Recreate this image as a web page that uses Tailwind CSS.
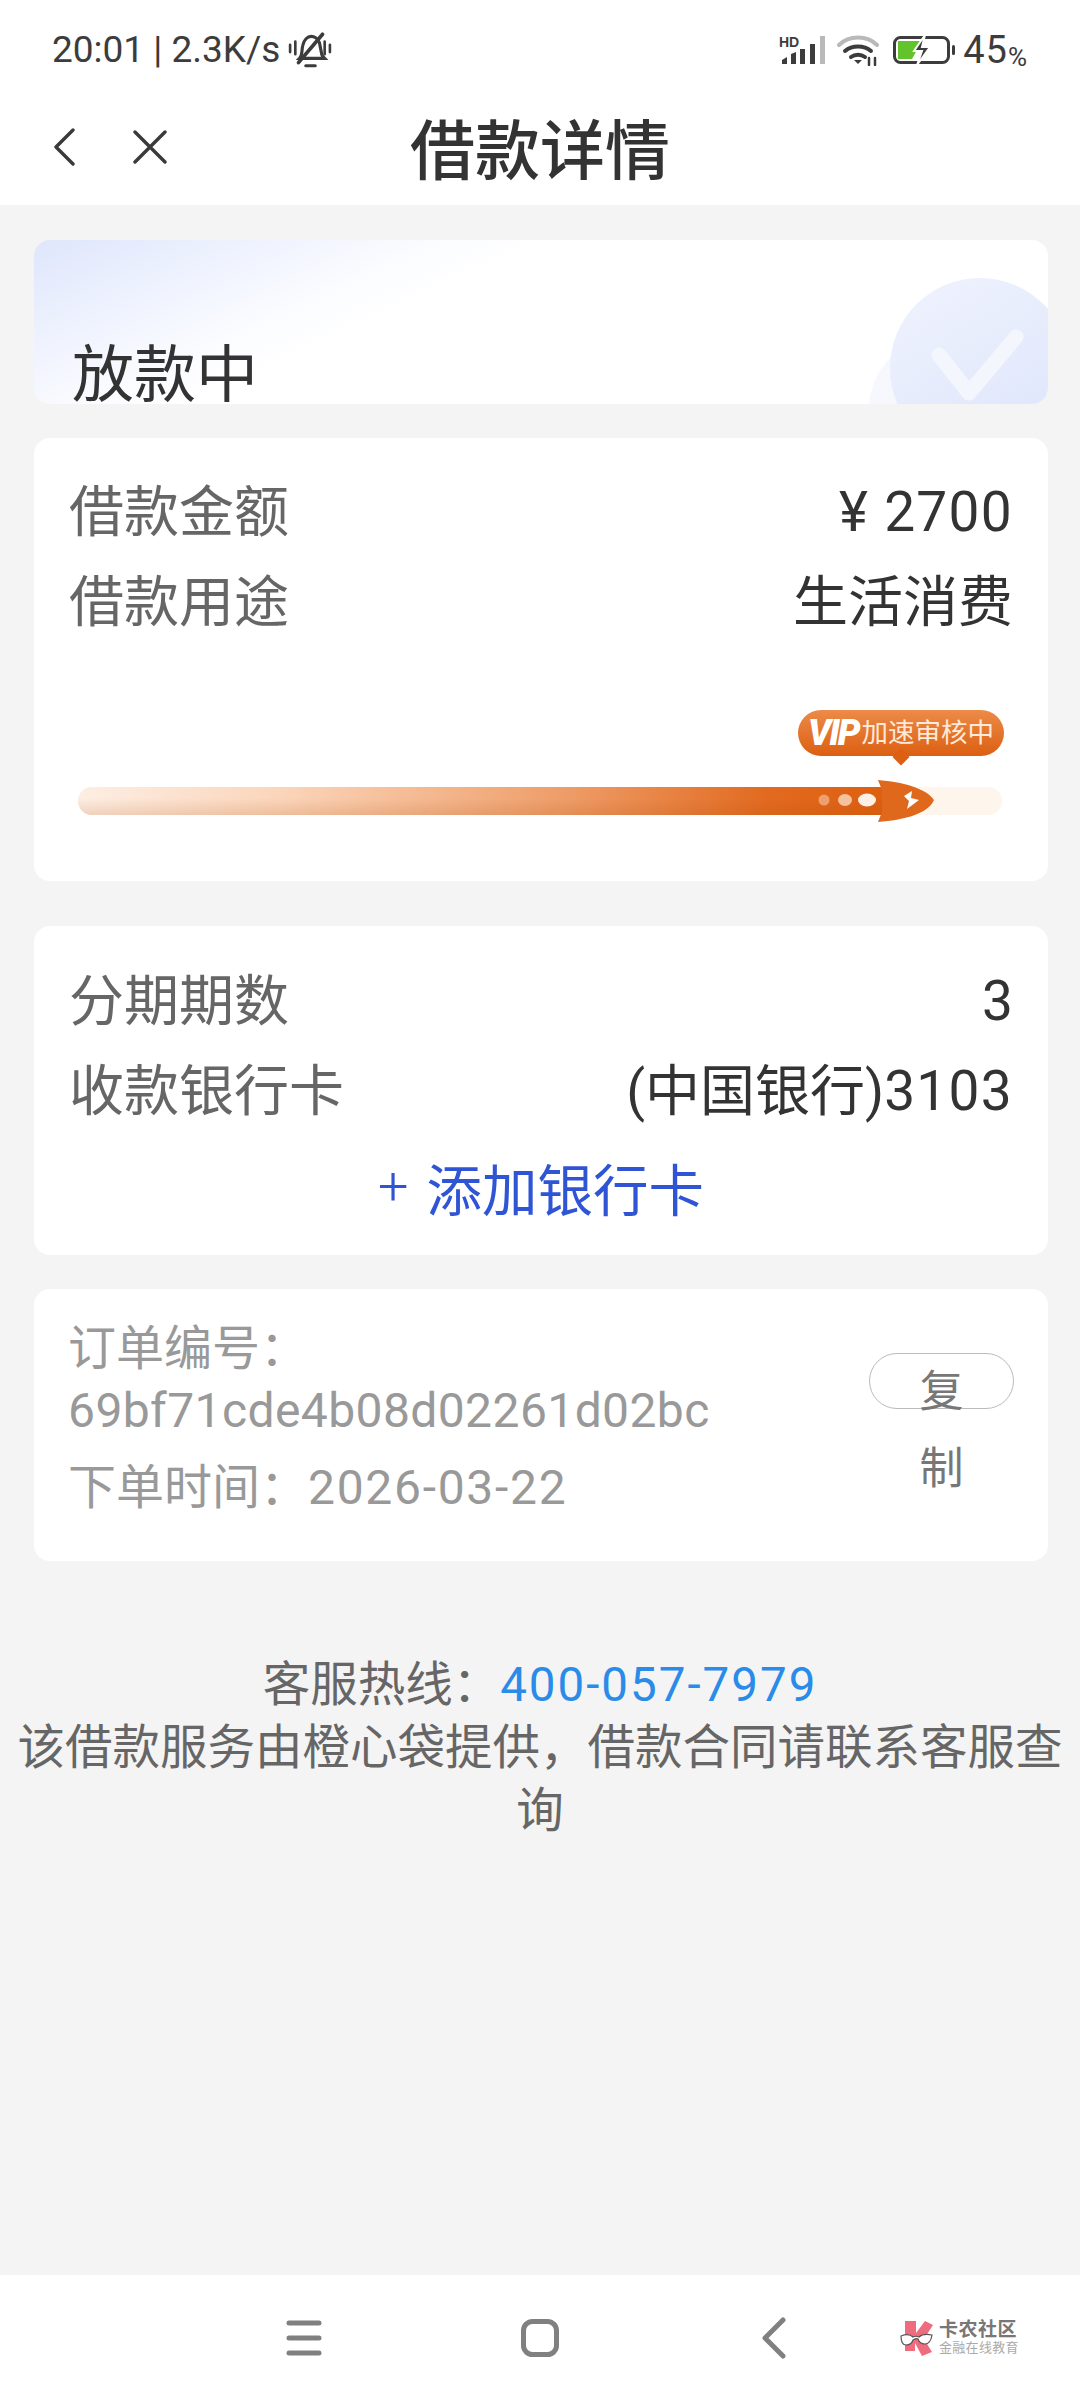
<!DOCTYPE html>
<html lang="zh-CN">
  <head>
    <meta charset="UTF-8" />
    <meta name="viewport" content="width=device-width, initial-scale=1.0" />
    <script src="https://cdn.jsdelivr.net/npm/@tailwindcss/browser@4"></script>
    <title>借款详情</title>
  </head>
  <body>
    <div class="flex h-[2400px] w-[1080px] flex-col overflow-hidden bg-[#f4f4f4] font-['Roboto','Noto_Sans_CJK_SC',sans-serif] text-[#333]">
      <!-- status bar -->
      <div class="flex h-[100px] items-center justify-between bg-white pr-[53px] pl-[52px] text-[#3c3c3c]">
        <div class="flex items-center text-[37px]">
          <span>20:01 | 2.3K/s</span>
          <svg class="ml-[8px]" width="44" height="38" viewBox="0 0 42 36" fill="none" stroke="#3c3c3c" stroke-width="3" stroke-linecap="round">
            <path d="M2 13v7M7 10v12M35 10v12M40 13v7" stroke-width="2.5" />
            <path d="M11 26c3-3 2-8 3-12 1-6 5-9 8-9s7 2 8 6l2 10c0 2 2 4 3 5z" />
            <path d="M10 30 33 3" stroke-width="3.5" />
            <path d="M17 33h9" />
          </svg>
        </div>
        <div class="flex items-center">
          <svg width="46" height="32" viewBox="0 0 46 32">
            <text x="0" y="13" font-family="Liberation Sans" font-size="14" font-weight="700" fill="#3c3c3c">HD</text>
            <path d="M3 30v-4l5-3v7zM12 30v-10l5-2v12zM21 30v-15h5v15zM31 30v-20h5v20z" fill="#3c3c3c" />
            <path d="M41 30v-28h5v28z" fill="#b9b9b9" />
          </svg>
          <svg class="ml-[12px]" width="42" height="32" viewBox="0 0 42 32" fill="none" stroke-linecap="round">
            <path d="M2 11c10-10 28-10 38 0" stroke="#b9b9b9" stroke-width="4" />
            <path d="M8 17c7-6 19-6 26 0" stroke="#3c3c3c" stroke-width="4" />
            <path d="M14 23c4-3 10-3 14 0" stroke="#3c3c3c" stroke-width="4" />
            <path d="M17 26h8l-4 4z" fill="#3c3c3c" />
            <path d="M32 24v7M38 24v7" stroke="#3c3c3c" stroke-width="2.5" />
          </svg>
          <svg class="ml-[14px]" width="62" height="32" viewBox="0 0 62 32" fill="none">
            <rect x="1.5" y="3.5" width="54" height="25" rx="6" stroke="#3c3c3c" stroke-width="3" />
            <path d="M5 7h24l-10 18H5z" fill="#62c32d" />
            <path d="M32 1 21 17h8l-5 14 13-18h-8z" fill="#3c3c3c" stroke="#fff" stroke-width="2" />
            <rect x="59" y="11" width="3" height="10" rx="1.5" fill="#3c3c3c" />
          </svg>
          <span class="ml-[8px] text-[38px] tracking-[1px]">45</span><span class="self-end text-[26px] leading-[44px]">%</span>
        </div>
      </div>

      <!-- title bar -->
      <div class="relative flex h-[105px] items-center justify-center bg-white">
        <div class="absolute top-[28px] left-[53px] flex items-center gap-[58px]">
          <svg width="22" height="38" viewBox="0 0 22 38" fill="none" stroke="#3a3a3a" stroke-width="3.4" stroke-linecap="round" stroke-linejoin="round"><path d="M20 2 3 19l17 17" /></svg>
          <svg width="34" height="34" viewBox="0 0 34 34" fill="none" stroke="#3a3a3a" stroke-width="3.4" stroke-linecap="round"><path d="M2 2l30 30M32 2 2 32" /></svg>
        </div>
        <h1 class="text-[65px] font-medium">借款详情</h1>
      </div>

      <main class="flex flex-col pr-[32px] pl-[34px]">
        <!-- status card -->
        <section class="relative mt-[35px] h-[164px] overflow-hidden rounded-[16px] bg-white bg-[linear-gradient(155deg,#dfe6fc_0%,#eef2fe_16%,#fbfcff_30%,#ffffff_38%)]">
          <div class="absolute top-[95px] left-[835px] h-[150px] w-[150px] rounded-full bg-[#f6f8fe]"></div>
          <div class="absolute top-[38px] left-[856px] h-[180px] w-[180px] rounded-full bg-[linear-gradient(150deg,#f0f3fe,#dce4fb)]"></div>
          <svg class="absolute top-[88px] left-[896px]" width="96" height="76" viewBox="0 0 96 76" fill="none" stroke="#f4f6fd" stroke-width="15" stroke-linecap="round" stroke-linejoin="round"><path d="M9 27l30 38L86 9" /></svg>
          <p class="relative pt-[94px] pl-[38px] text-[62px] leading-[84px]">放款中</p>
        </section>

        <!-- amount card -->
        <section class="mt-[34px] h-[443px] rounded-[16px] bg-white pt-[29px] pr-[35px] pl-[35px]">
          <div class="flex h-[90px] items-center justify-between text-[55px]">
            <span class="text-[#666]">借款金额</span><span class="tracking-[1.3px]">¥ 2700</span>
          </div>
          <div class="flex h-[90px] items-center justify-between text-[55px]">
            <span class="text-[#666]">借款用途</span><span>生活消费</span>
          </div>
          <div class="relative mt-[60px] h-[100px]">
            <div class="absolute top-[3px] left-[729px] flex h-[46px] w-[206px] items-center justify-center gap-[3px] rounded-full bg-[linear-gradient(180deg,#ec8b48,#dc5f12)] text-[26.5px] text-[#ffe9d8]">
              <span class="text-[36px] leading-none font-black tracking-[-2px] text-white italic">VIP</span><span>加速审核中</span>
            </div>
            <div class="absolute top-[44px] left-[826px] h-[12px] w-[12px] rotate-45 bg-[#dc5f12]"></div>
            <div class="absolute top-[80px] left-[9px] h-[28px] w-[924px] rounded-full bg-[#fef5ec]"></div>
            <div class="absolute top-[80px] left-[9px] h-[28px] w-[810px] rounded-l-full bg-[linear-gradient(90deg,#fdeee3_0%,#fbd5ba_25%,#ee9d68_60%,#e26a20_85%,#dd5f10_100%)]"></div>
            <div class="absolute top-[80px] left-[9px] h-[28px] w-[810px] rounded-l-full bg-[linear-gradient(180deg,transparent_40%,rgba(170,70,0,0.16))]"></div>
            <svg class="absolute top-[73px] left-[729px]" width="140" height="44" viewBox="0 0 140 44">
              <circle cx="26" cy="20" r="5.5" fill="#ee9f6d" />
              <ellipse cx="47" cy="20" rx="7" ry="6" fill="#f5c2a0" />
              <ellipse cx="69" cy="20" rx="9" ry="6.5" fill="#fdf0e6" />
              <path d="M80 0c24 2 48 8 56 20-6 14-30 20-56 22l4-10V10z" fill="#e0681c" />
              <path d="M106 16l8-5-1 7 8 2-12 9 2-8z" fill="#fff" />
            </svg>
          </div>
        </section>

        <!-- repayment card -->
        <section class="mt-[45px] h-[329px] rounded-[16px] bg-white pt-[30px] pr-[35px] pl-[35px]">
          <div class="flex h-[90px] items-center justify-between text-[55px]">
            <span class="text-[#666]">分期期数</span><span>3</span>
          </div>
          <div class="flex h-[90px] items-center justify-between text-[55px]">
            <span class="text-[#666]">收款银行卡</span><span>(中国银行)<span class="tracking-[1.3px]">3103</span></span>
          </div>
          <div class="mt-[8px] flex h-[98px] items-center justify-center text-[55.5px] text-[#2f55d4]"><span class="mr-[18px] mb-[14px] text-[54px] font-light">+</span>添加银行卡</div>
        </section>

        <!-- order card -->
        <section class="mt-[34px] flex h-[272px] justify-between rounded-[16px] bg-white pt-[29px] pr-[34px] pl-[34px] text-[48px] text-[#999]">
          <div>
            <p class="leading-[62px]">订单编号：</p>
            <p class="leading-[62px] tracking-[0.4px]">69bf71cde4b08d02261d02bc</p>
            <p class="mt-[15px] leading-[62px]">下单时间：<span class="tracking-[1.7px]">2026-03-22</span></p>
          </div>
          <div class="mt-[35px] h-[56px] w-[145px] rounded-full border border-[#bbb] px-[30px] text-center text-[44px] leading-[77px] text-[#777]">复制</div>
        </section>
      </main>

      <!-- service note -->
      <footer class="mt-[93px] px-[8px] text-center text-[47.5px] leading-[63px] text-[#666]">
        <p>客服热线：<span class="tracking-[2px] text-[#2a8be8]">400-057-7979</span></p>
        <p>该借款服务由橙心袋提供，借款合同请联系客服查询</p>
      </footer>

      <!-- navigation bar -->
      <nav class="mt-auto flex h-[125px] items-center bg-white pl-[286px]">
        <svg width="36" height="36" viewBox="0 0 36 36" stroke="#808080" stroke-width="5" stroke-linecap="round"><path d="M3 3h30M3 18h30M3 33h30" /></svg>
        <svg class="ml-[199px]" width="38" height="38" viewBox="0 0 38 38" fill="none" stroke="#808080" stroke-width="5"><rect x="2.5" y="2.5" width="33" height="33" rx="9" /></svg>
        <svg class="ml-[203px]" width="24" height="42" viewBox="0 0 24 42" fill="none" stroke="#808080" stroke-width="5" stroke-linecap="round" stroke-linejoin="round"><path d="M21 3 3 21l18 18" /></svg>
        <div class="ml-[114px] flex items-center">
          <svg width="36" height="36" viewBox="0 0 36 36">
            <path d="M5 1h11v12l9-12 8 4-9 14 8 13-10 4-7-13v8H5z" fill="#ee6c7d" />
            <path d="M1 16c5-2 9-2 12 1 2-1 4-1 6 0 3-3 8-3 13-2-1 6-3 9-7 9-4 0-6-2-7-5-2-1-3 0-5 1-1 3-3 5-7 5-3 0-5-3-5-9z" fill="#fff" stroke="#555" stroke-width="1.2" />
          </svg>
          <div class="ml-[3px] flex flex-col text-[#777]">
            <span class="text-[19px] leading-[21px] font-bold tracking-[0.5px]">卡农社区</span>
            <span class="text-[13px] leading-[16px] tracking-[0.3px] text-[#aaa]">金融在线教育</span>
          </div>
        </div>
      </nav>
    </div>
  </body>
</html>
